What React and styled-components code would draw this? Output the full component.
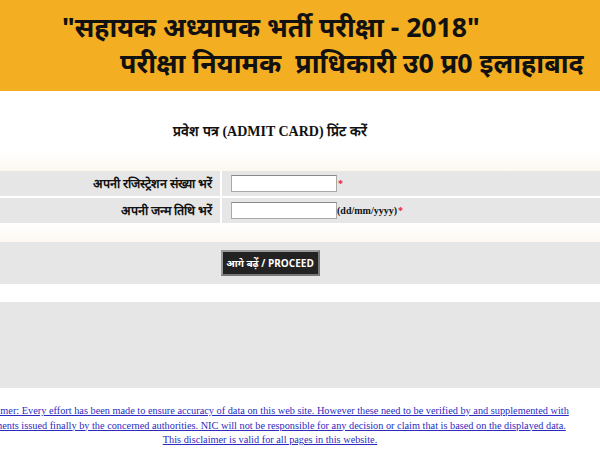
import styled, { createGlobalStyle } from "styled-components";

const GlobalStyle = createGlobalStyle`
  html, body {
    margin: 0;
    padding: 0;
    background: #ffffff;
    overflow: hidden;
  }
  body {
    width: 600px;
    font-family: "Liberation Serif", "Times New Roman", serif;
  }
`;

const Header = styled.header`
  background: #f3ae22;
  height: 91px;
  box-sizing: border-box;
  padding-top: 10px;
  font-family: "Noto Sans", "Open Sans", sans-serif;
  font-weight: 700;
  color: #111;
`;

const HeadLine = styled.div`
  font-size: ${(p) => p.size}px;
  line-height: 35px;
  padding-left: ${(p) => p.indent}px;
  white-space: nowrap;
`;

// the form part of the page is centred a little left of the window
const Page = styled.main`
  width: 660px;
  margin-left: -60px;
`;

const Title = styled.h2`
  margin: 0;
  height: 59px;
  box-sizing: border-box;
  padding-top: 30px;
  text-align: center;
  font-size: 14px;
  font-weight: 700;
  color: #111;
`;

const Fade = styled.div`
  height: ${(p) => p.h}px;
  background: linear-gradient(#ffffff, #fdf7f0);
`;

const FormGrid = styled.div`
  display: grid;
  grid-template-columns: 280px 1fr;
  gap: 2px 2px;
  background: #ffffff;
`;

const Label = styled.div`
  background: #e6e6e6;
  height: 25px;
  display: flex;
  align-items: center;
  justify-content: flex-end;
  padding-right: 8px;
  font-size: 12.5px;
  font-weight: 700;
  color: #111;
`;

const Field = styled.div`
  background: #e6e6e6;
  height: 25px;
  display: flex;
  align-items: center;
  padding-left: 9px;
  font-size: 10px;
  font-weight: 700;
  color: #111;
`;

const Input = styled.input`
  width: 106px;
  height: 17px;
  box-sizing: border-box;
  border: 1px solid #a9a9a9;
  border-top-color: #8a8a8a;
  background: #fff;
  margin: 0;
  padding: 0 2px;
`;

const Req = styled.span`
  color: #e0202a;
  font-weight: 700;
  margin-left: 1px;
`;

const Band = styled.div`
  background: #e6e6e6;
  height: ${(p) => p.h}px;
  display: flex;
  justify-content: center;
  align-items: flex-start;
  padding-top: ${(p) => p.pad || 0}px;
  box-sizing: border-box;
`;

const Gap = styled.div`
  height: ${(p) => p.h}px;
`;

const Proceed = styled.button`
  width: 99px;
  height: 26px;
  background: #222222;
  color: #ffffff;
  border: 2px solid #9a9a9a;
  border-right-color: #777;
  border-bottom-color: #777;
  font-family: "Open Sans", "Noto Sans", sans-serif;
  font-weight: 700;
  font-size: 10px;
  padding: 0;
  cursor: pointer;
`;

const Disclaimer = styled.footer`
  padding: 16px 30px 0;
  text-align: center;
  font-size: 10.3px;
  line-height: 14.5px;
  white-space: nowrap;

  a {
    color: #2b2bbf;
    text-decoration: underline;
  }
`;

export default function App() {
  return (
    <>
      <GlobalStyle />
      <Header>
        <HeadLine size={26.6} indent={62}>
          "सहायक अध्यापक भर्ती परीक्षा - 2018"
        </HeadLine>
        <HeadLine size={26.8} indent={120}>
          परीक्षा नियामक&nbsp; प्राधिकारी उ0 प्र0 इलाहाबाद
        </HeadLine>
      </Header>
      <Page>
        <Title>प्रवेश पत्र (ADMIT CARD) प्रिंट करें</Title>
        <Fade h={21} />
        <FormGrid>
          <Label>अपनी रजिस्ट्रेशन संख्या भरें</Label>
          <Field>
            <Input type="text" />
            <Req>*</Req>
          </Field>
          <Label>अपनी जन्म तिथि भरें</Label>
          <Field>
            <Input type="text" />
            (dd/mm/yyyy)<Req>*</Req>
          </Field>
        </FormGrid>
        <Fade h={19} />
        <Band h={42} pad={8}>
          <Proceed>आगे बढ़ें / PROCEED</Proceed>
        </Band>
        <Gap h={18} />
        <Band h={86} />
        <Disclaimer>
          <a href="#">
            Disclaimer: Every effort has been made to ensure accuracy of data on this web site. However these need to be verified by and supplemented with
            <br />
            documents issued finally by the concerned authorities. NIC will not be responsible for any decision or claim that is based on the displayed data.
            <br />
            This disclaimer is valid for all pages in this website.
          </a>
        </Disclaimer>
      </Page>
    </>
  );
}
